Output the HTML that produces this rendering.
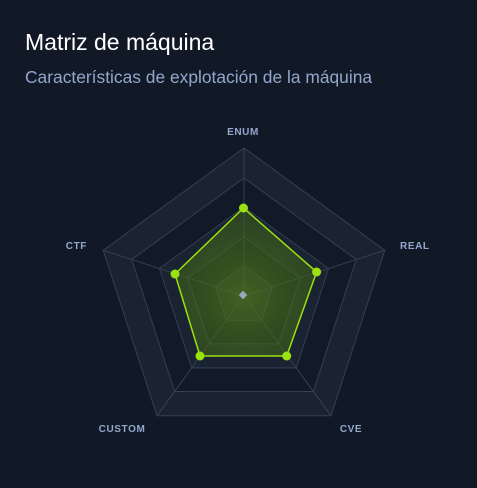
<!DOCTYPE html>
<html><head><meta charset="utf-8"><style>
html,body{margin:0;padding:0;background:#111927;width:477px;height:488px;overflow:hidden;font-family:"Liberation Sans",sans-serif}
.t{position:absolute;left:25px;top:29px;color:#fff;font-size:23px}
.s{position:absolute;left:25px;top:67px;color:#94a6cc;font-size:17.4px}
</style></head><body>
<div class="t">Matriz de máquina</div>
<div class="s">Características de explotación de la máquina</div>
<svg width="477" height="488" style="position:absolute;left:0;top:0">
<defs><radialGradient id="g" cx="244" cy="296" r="90" gradientUnits="userSpaceOnUse"><stop offset="0" stop-color="#4f7a1c" stop-opacity=".95"/><stop offset="1" stop-color="#3c6016" stop-opacity=".65"/></radialGradient></defs>
<g stroke="#343f52" stroke-width="1">
<polygon points="244,148 384.8,250.3 331,415.7 157,415.7 103.2,250.3" fill="#1a2332"/>
<polygon points="244,178 356.2,259.5 313.4,391.5 174.6,391.5 131.8,259.5" fill="#121a28"/>
<polygon points="244,207 328.6,268.5 296.3,367.9 191.7,367.9 159.4,268.5" fill="#1a2332"/>
<polygon points="244,237 300.1,277.8 278.7,343.7 209.3,343.7 187.9,277.8" fill="#121a28"/>
<polygon points="244,266 272.5,286.7 261.6,320.3 226.4,320.3 215.5,286.7" fill="#1a2332"/>
<line x1="244" y1="296" x2="244" y2="148"/><line x1="244" y1="296" x2="384.8" y2="250.3"/><line x1="244" y1="296" x2="331" y2="415.7"/><line x1="244" y1="296" x2="157" y2="415.7"/><line x1="244" y1="296" x2="103.2" y2="250.3"/>
</g>
<polygon points="243.5,208 316.6,272 286.7,356 200,356 175,274" fill="url(#g)" fill-opacity=".75" stroke="#9be00f" stroke-width="1.5"/>
<g fill="#9be00f"><circle cx="243.5" cy="208" r="4.5"/><circle cx="316.6" cy="272" r="4.5"/><circle cx="286.7" cy="356" r="4.5"/><circle cx="200" cy="356" r="4.5"/><circle cx="175" cy="274" r="4.5"/></g>
<rect x="240" y="292" width="6" height="6" fill="#9aa8c2" transform="rotate(45 243 295)"/>
<g fill="#94a6cc" font-size="10" font-weight="bold" font-family="Liberation Sans,sans-serif" letter-spacing="0.6">
<text x="243" y="135" text-anchor="middle">ENUM</text>
<text x="400" y="249">REAL</text>
<text x="351" y="432" text-anchor="middle">CVE</text>
<text x="122" y="432" text-anchor="middle">CUSTOM</text>
<text x="87" y="249" text-anchor="end">CTF</text>
</g>
</svg>
</body></html>
